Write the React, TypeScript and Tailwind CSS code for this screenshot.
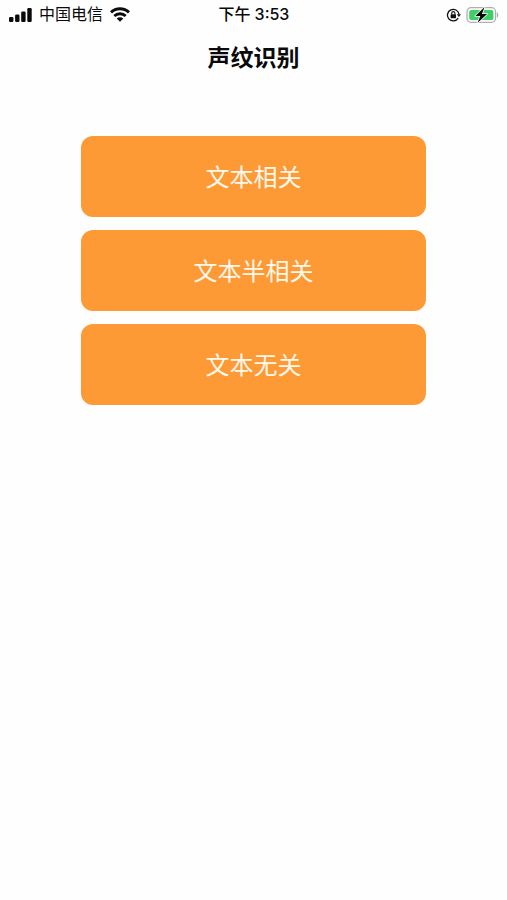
const modes = ["文本相关", "文本半相关", "文本无关"];

function SignalIcon() {
  return (
    <svg width="23" height="14" viewBox="0 0 23 14" fill="#0a0a0a" aria-hidden="true">
      <rect x="0" y="9" width="4.4" height="5" rx="1.2" />
      <rect x="6.1" y="6.5" width="4.4" height="7.5" rx="1.2" />
      <rect x="12.2" y="3.5" width="4.4" height="10.5" rx="1.2" />
      <rect x="18.3" y="0" width="4.4" height="14" rx="1.2" />
    </svg>
  );
}

function WifiIcon() {
  return (
    <svg width="20" height="15" viewBox="0 0 20 15" fill="none" stroke="#0a0a0a" strokeWidth="2.9" aria-hidden="true">
      <path d="M1 5.4C6 .6 14 .6 19 5.4" />
      <path d="M4.3 9c3.2-3 8.2-3 11.4 0" />
      <path d="M10 14.8 6.7 11.6c1.8-1.7 4.8-1.7 6.6 0z" fill="#0a0a0a" stroke="none" />
    </svg>
  );
}

function RotationLockIcon() {
  return (
    <svg width="15" height="14" viewBox="0 0 15 14" fill="none" stroke="#111" aria-hidden="true">
      <path d="M12.2 10.2A5.8 5.8 0 1 1 13 6.2" strokeWidth="1.3" />
      <path d="M10.8 6.2h4.2l-2.1 2.8z" fill="#111" stroke="none" />
      <rect x="4.6" y="6.3" width="5.4" height="4" rx=".7" fill="#111" stroke="none" />
      <path d="M5.7 6.6V5.2a1.6 1.6 0 0 1 3.2 0v1.4" strokeWidth="1.1" />
    </svg>
  );
}

function BatteryIcon() {
  return (
    <svg width="33" height="18" viewBox="0 0 33 18" fill="none" aria-hidden="true">
      <rect x="1" y="1.7" width="28.6" height="14.6" rx="4" stroke="#b0b0b0" strokeWidth="1.3" />
      <path d="M31 6.5c1.7.6 1.7 4.4 0 5z" fill="#a9a9a9" />
      <rect x="3.2" y="3.9" width="24.2" height="10.2" rx="2.2" fill="#3fcf68" />
      <path
        d="M18.6 1 9.3 10h5l-2.8 7 9.6-9h-5.2z"
        fill="#080808"
        stroke="#fff"
        strokeWidth="1.6"
        strokeLinejoin="round"
        paintOrder="stroke"
      />
    </svg>
  );
}

export default function App() {
  return (
    <div className="min-h-screen bg-[#fefefe] font-['Inter','Noto_Sans_CJK_SC',sans-serif] text-[#0a0a0a]">
      <div className="grid h-[29px] grid-cols-[1fr_auto_1fr] items-center pr-2 pl-[9px] text-base leading-[29px]">
        <div className="flex items-center gap-[7px]">
          <SignalIcon />
          <span>中国电信</span>
          <WifiIcon />
        </div>
        <div className="flex gap-1 font-medium">
          <span>下午</span>
          <span>3:53</span>
        </div>
        <div className="flex items-center justify-end gap-[5px]">
          <RotationLockIcon />
          <BatteryIcon />
        </div>
      </div>

      <header className="flex h-[58px] items-center justify-center">
        <h1 className="text-[23px] leading-8 font-bold">声纹识别</h1>
      </header>

      <main className="mx-auto mt-[49px] flex w-[68%] flex-col gap-[13px]">
        {modes.map((mode) => (
          <button
            key={mode}
            type="button"
            className="h-[81px] rounded-xl bg-[#fe9a36] pt-0.5 text-2xl font-normal text-[#fff8ec]"
          >
            {mode}
          </button>
        ))}
      </main>
    </div>
  );
}
